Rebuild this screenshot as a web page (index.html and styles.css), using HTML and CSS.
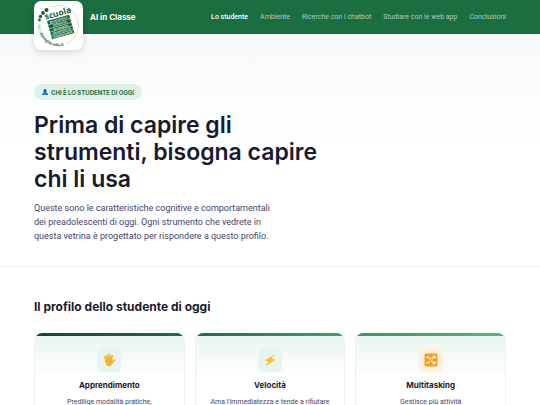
FILE: index.html
```html
<!DOCTYPE html>
<html lang="it">
<head>
    <meta charset="UTF-8">
    <meta name="viewport" content="width=device-width, initial-scale=1.0">
    <title>AI in Classe - Lo studente</title>
    <link rel="stylesheet" href="styles.css">
</head>
<body>
    <header class="navbar">
        <a href="#" class="brand">
            <span class="brand-logo">
                <svg viewBox="0 0 98 98" role="img" aria-label="Scuola Sacra Famiglia">
                    <path d="M36 12A39 39 0 1 1 64 85" fill="none" stroke="#c9cfcc" stroke-width="1.5"/>
                    <g fill="#14603a">
                        <circle cx="25" cy="18" r="4"/>
                        <circle cx="18" cy="24" r="3.8"/>
                        <circle cx="13" cy="31" r="3.4"/>
                        <circle cx="11" cy="38" r="2.8"/>
                    </g>
                    <g transform="rotate(-16 53 51)">
                        <text class="logo-title" x="28" y="30">scuola</text>
                        <rect x="30" y="33" width="46" height="38" fill="#14603a"/>
                        <path d="M30 41h46M30 49h46M30 56h46M30 64h46" stroke="#fff" stroke-width="1"/>
                        <g class="logo-list">
                            <text x="53" y="39">primavera</text>
                            <text x="53" y="47">infanzia</text>
                            <text x="53" y="55">primaria</text>
                            <text x="53" y="62">secondaria</text>
                            <text x="53" y="70">doposcuola</text>
                        </g>
                    </g>
                    <path id="logoArc" d="M8 46A42 42 0 0 0 64 88" fill="none"/>
                    <text class="logo-url"><textPath href="#logoArc"><tspan class="logo-url-light">sacra</tspan>famiglia.edu.it</textPath></text>
                </svg>
            </span>
            <span class="brand-name">AI in Classe</span>
        </a>
        <nav class="nav-links">
            <a href="#" class="active">Lo studente</a>
            <a href="#">Ambiente</a>
            <a href="#">Ricerche con i chatbot</a>
            <a href="#">Studiare con le web app</a>
            <a href="#">Conclusioni</a>
        </nav>
    </header>

    <section class="hero">
        <div class="badge">
            <svg class="badge-icon" viewBox="0 0 16 16" aria-hidden="true">
                <path d="M0 16v-2c0-3 2-4 5-5h6c3 1 5 2 5 5v2z" fill="#2583d0"/>
                <ellipse cx="8" cy="5" rx="4.500" ry="5" fill="#1565a8"/>
                <path d="M6 8h4v3H6z" fill="#1565a8"/>
            </svg>
            <span>CHI È LO STUDENTE DI OGGI</span>
        </div>
        <h1>Prima di capire gli strumenti, bisogna capire chi li usa</h1>
        <p>Queste sono le caratteristiche cognitive e comportamentali dei preadolescenti di oggi. Ogni strumento che vedrete in questa vetrina è progettato per rispondere a questo profilo.</p>
    </section>

    <main class="profile">
        <h2>Il profilo dello studente di oggi</h2>
        <div class="card-grid">
            <article class="card card-dark">
                <div class="card-icon">
                    <svg viewBox="0 0 24 24" aria-hidden="true">
                        <g fill="none" stroke="#fbb42b" stroke-width="3" stroke-linecap="round">
                            <path d="M7 13L4.500 6.500M10 12L8.500 3.500M13 12L13 2.500M16 13L17.500 4.500M16.500 18L21.500 12"/>
                        </g>
                        <path d="M5.500 11.500L17.500 11.500L18 16C18 20 16 22.500 12 22.500C8 22.500 6 19 5.500 11.500Z" fill="#fbb42b"/>
                        <path d="M8.500 11L7.500 7M11.400 11V6M14.500 11L15 7M12 18C13 15.500 14.500 14.500 16.500 15" fill="none" stroke="#e08b1c" stroke-width=".8"/>
                    </svg>
                </div>
                <h3>Apprendimento</h3>
                <p>Predilige modalità pratiche,</p>
            </article>
            <article class="card card-mid">
                <div class="card-icon">
                    <svg viewBox="0 0 24 24" aria-hidden="true">
                        <path d="M20.500 2L3 13L9.500 14.500L3.500 23L21.500 11.500L14.500 10Z" fill="#fdbd2c"/>
                    </svg>
                </div>
                <h3>Velocità</h3>
                <p>Ama l'immediatezza e tende a rifiutare</p>
            </article>
            <article class="card card-light">
                <div class="card-icon card-icon-orange">
                    <svg viewBox="0 0 24 24" aria-hidden="true">
                        <rect x="1" y="1" width="22" height="22" rx="2" fill="#f99a1c"/>
                        <path d="M4 7h3.500L15.500 17H18M4 17h3.500l2.500-3M13 10l2.500-3H18" fill="none" stroke="#fff3dc" stroke-width="2.400"/>
                        <path d="M16.500 3L21 7L16.500 11ZM16.500 13L21 17L16.500 21Z" fill="#fff3dc"/>
                    </svg>
                </div>
                <h3>Multitasking</h3>
                <p>Gestisce più attività</p>
            </article>
        </div>
    </main>
</body>
</html>
```
FILE: styles.css
```css
:root {
    --primary-color: #1b6e40;
    --text-color: #1a1a2e;
    --muted-color: #45456a;
    --border-color: #f0f0f2;
    --mint: #e8f5ee;
}

* {
    box-sizing: border-box;
}

body {
    font-family: 'Inter', sans-serif;
    margin: 0;
    height: 100vh;
    overflow: hidden;
    background-color: white;
    color: var(--text-color);
}

a {
    text-decoration: none;
}

h1, h2, h3, p {
    margin: 0;
}

.navbar {
    display: flex;
    align-items: center;
    justify-content: space-between;
    height: 34px;
    padding: 0 34px;
    background-color: var(--primary-color);
}

.brand {
    position: relative;
    padding-left: 56px;
    color: white;
    font-size: 8px;
    font-weight: 700;
}

/* the logo tile hangs below the bar */
.brand-logo {
    position: absolute;
    left: 0;
    top: 50%;
    width: 49px;
    height: 49px;
    margin-top: -16px;
    background-color: white;
    border-radius: 7px;
    box-shadow: 0 2px 7px rgba(0,0,0,0.15);
}

.brand-logo svg {
    display: block;
    width: 100%;
}

.logo-title {
    font: 700 17px 'Open Sans', sans-serif;
    fill: #14603a;
}

.logo-list {
    font: 700 7px 'Open Sans', sans-serif;
    fill: #cfe3d8;
    text-anchor: middle;
}

.logo-url {
    font: 700 8px 'Open Sans', sans-serif;
    fill: #14603a;
}

.logo-url-light {
    font-weight: 400;
    fill: #6d8a7a;
}

.nav-links {
    display: flex;
    gap: 12px;
    font-family: 'Roboto', sans-serif;
    font-size: 7px;
    line-height: 12px;
}

.nav-links a {
    color: rgba(255,255,255,0.65);
    white-space: nowrap;
}

.nav-links a.active {
    color: white;
    font-weight: 500;
}

.hero {
    padding: 50px 34px 23px;
    background: linear-gradient(#f7faf9, white 50%);
    border-bottom: 1px solid var(--border-color);
}

.badge {
    display: flex;
    align-items: center;
    gap: 3px;
    width: fit-content;
    height: 16px;
    padding: 0 8px;
    border-radius: 8px;
    background-color: #dff1e6;
    color: var(--primary-color);
    font-size: 6px;
    font-weight: 700;
}

.badge-icon {
    width: 6px;
    height: 6px;
}

.hero h1 {
    max-width: 300px;
    margin-top: 12px;
    font-size: 23px;
    font-weight: 600;
    line-height: 27px;
}

.hero p {
    max-width: 240px;
    margin-top: 8px;
    color: var(--muted-color);
    font-family: 'Roboto', sans-serif;
    font-size: 9px;
    line-height: 14px;
}

.profile {
    padding: 32px 34px;
}

.profile h2 {
    font-size: 12px;
    font-weight: 700;
    line-height: 16px;
}

.card-grid {
    display: grid;
    grid-template-columns: repeat(3, 1fr);
    gap: 10px;
    margin-top: 18px;
}

.card {
    display: flex;
    flex-direction: column;
    align-items: center;
    padding-bottom: 16px;
    overflow: hidden;
    border: 1px solid var(--border-color);
    border-top: none;
    border-radius: 8px;
    background: linear-gradient(var(--mint), white 45px);
    text-align: center;
}

.card::before {
    content: '';
    width: 100%;
    height: 3px;
}

.card-dark::before {
    background: linear-gradient(90deg, #14472c, #226b45);
}

.card-mid::before {
    background: linear-gradient(90deg, #226b45, #45a06c);
}

.card-light::before {
    background: linear-gradient(90deg, #3a9562, #52b97c);
}

.card-icon {
    display: flex;
    align-items: center;
    justify-content: center;
    width: 24px;
    height: 24px;
    margin-top: 12px;
    border-radius: 5px;
    background-color: var(--mint);
}

.card-icon-orange {
    background-color: #fff0dd;
}

.card-icon svg {
    width: 14px;
    height: 14px;
}

.card h3 {
    margin-top: 7px;
    font-size: 8px;
    line-height: 12px;
}

.card p {
    margin-top: 5px;
    color: var(--muted-color);
    font-family: 'Roboto', sans-serif;
    font-size: 7px;
    line-height: 12px;
}
```
